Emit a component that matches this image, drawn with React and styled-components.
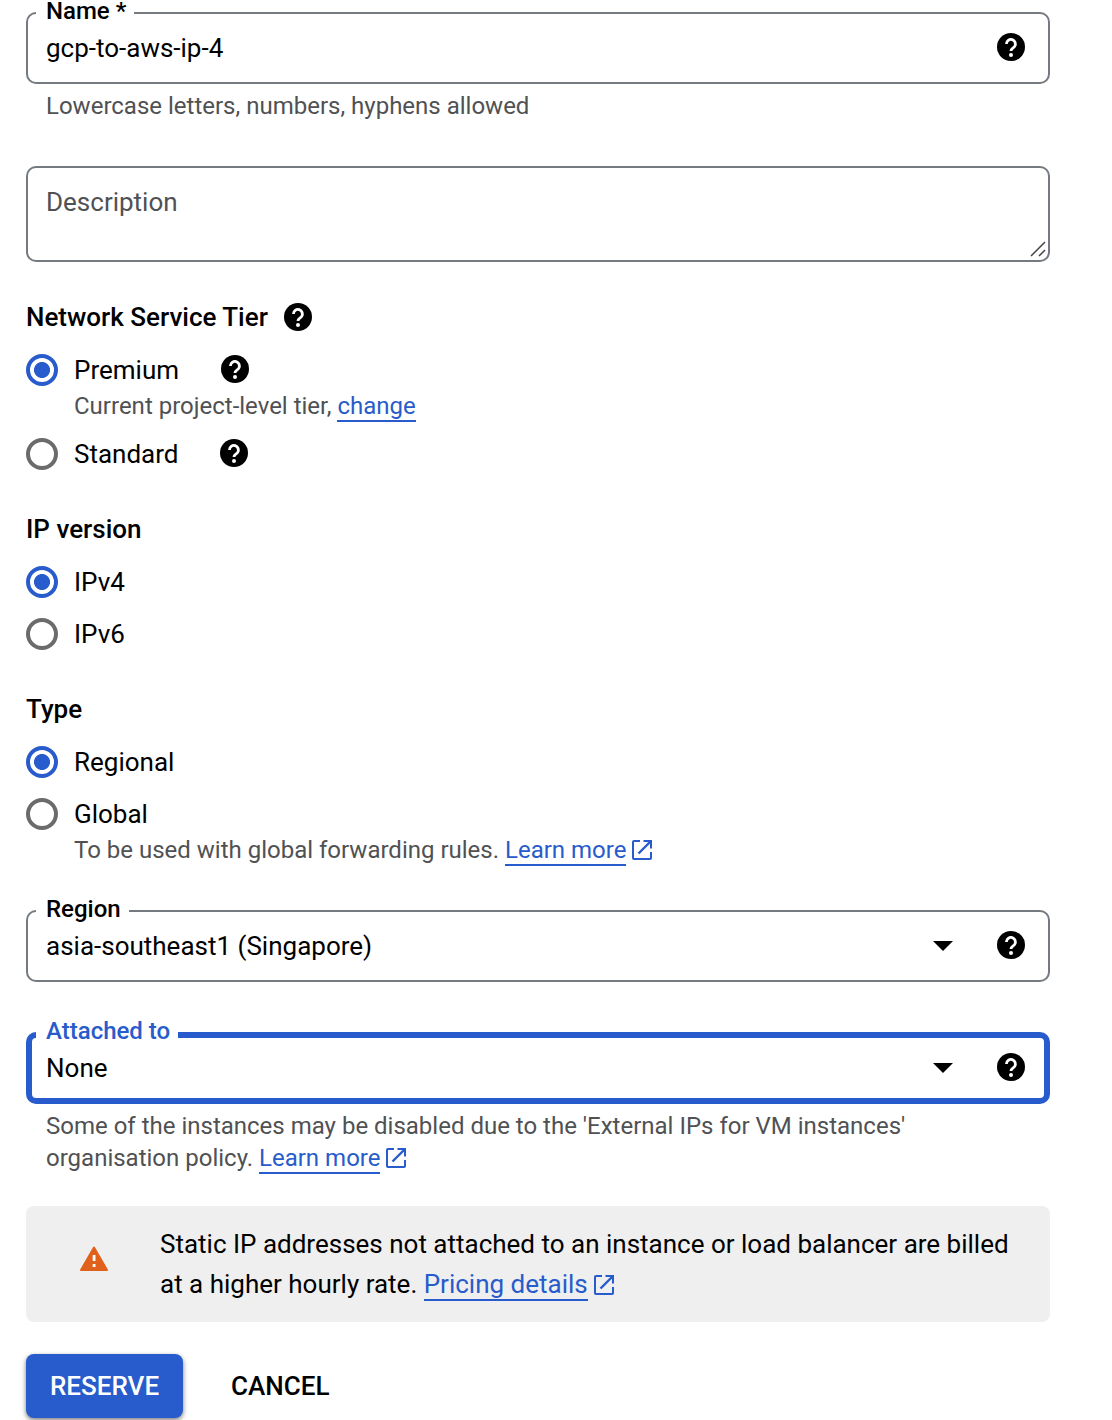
import React, { useState } from "react";
import styled, { createGlobalStyle } from "styled-components";

const blue = "#285bcb";
const grey = "#747a7f";
const mono = "#000";

const GlobalStyle = createGlobalStyle`
  *, *::before, *::after { box-sizing: border-box; }
  body {
    margin: 0;
    background: #fff;
    color: ${mono};
    font-family: Roboto, "Liberation Sans", sans-serif;
    font-size: 26px;
  }
  button, input, select, textarea { font: inherit; color: inherit; }
`;

const Form = styled.form`
  display: flex;
  flex-direction: column;
  padding: 12px 62px 2px 26px;
`;

const Field = styled.div`
  position: relative;
  display: flex;
  align-items: center;
  gap: 24px;
  height: 72px;
  margin-top: ${(p) => p.$gap || 0}px;
  padding: 0 25px 0 20px;
  border-radius: 10px;
  box-shadow: inset 0 0 0 ${(p) => (p.$active ? "6px" : "2px")} ${(p) => (p.$active ? blue : grey)};
`;

const FloatingLabel = styled.label`
  position: absolute;
  top: -12px;
  left: 10px;
  padding: 0 8px 2px 10px;
  background: #fff;
  color: ${(p) => (p.$active ? blue : mono)};
  font-size: 24px;
  font-weight: 500;
  line-height: 22px;
`;

const TextInput = styled.input`
  flex: 1;
  min-width: 0;
  height: 40px;
  padding: 0;
  border: 0;
  outline: 0;
  background: transparent;
`;

const SelectBox = styled.div`
  flex: 1;
  display: grid;
  align-items: center;
  padding-right: 20px;
`;

const Select = styled.select`
  grid-area: 1 / 1;
  width: 100%;
  height: 40px;
  padding: 0;
  border: 0;
  outline: 0;
  appearance: none;
  background: transparent;
`;

const Arrow = styled.svg`
  grid-area: 1 / 1;
  justify-self: end;
  width: 20px;
  height: 10px;
  pointer-events: none;
`;

const IconButton = styled.button`
  display: flex;
  padding: 0 0 2px;
  border: 0;
  background: none;
  cursor: pointer;
`;

const Hint = styled.p`
  margin: 6px 0 0;
  padding: 0 20px;
  color: #505153;
  font-size: 24px;
  line-height: 32px;
`;

const AreaBox = styled.div`
  display: grid;
  margin-top: 44px;
`;

const TextArea = styled.textarea`
  grid-area: 1 / 1;
  display: block;
  width: 100%;
  height: 96px;
  padding: 18px;
  border: 2px solid ${grey};
  border-radius: 10px;
  outline: 0;
  line-height: 32px;
  resize: none;
  background: transparent;
  &::placeholder { color: #505153; opacity: 1; }
`;

const Grip = styled.svg`
  grid-area: 1 / 1;
  place-self: end;
  width: 16px;
  height: 16px;
  margin: 0 4px 5px 0;
  pointer-events: none;
`;

const Section = styled.section`
  display: flex;
  flex-direction: column;
  gap: 16px;
  margin-top: ${(p) => p.$gap || 40}px;
`;

const Heading = styled.div`
  display: flex;
  align-items: center;
  gap: 16px;
  margin-bottom: 2px;
  ${IconButton} { padding: 0; }
`;

const Title = styled.h2`
  margin: 0;
  font-size: 26px;
  font-weight: 500;
  line-height: 34px;
`;

const OptionRow = styled.div`
  display: flex;
  align-items: center;
  gap: 42px;
  height: 36px;
`;

const OptionLabel = styled.label`
  display: flex;
  align-items: center;
  gap: 16px;
`;

const Radio = styled.input`
  appearance: none;
  width: 32px;
  height: 32px;
  margin: 0;
  border: 4px solid #6b6b6b;
  border-radius: 50%;
  &:checked {
    border-color: ${blue};
    background: radial-gradient(circle, ${blue} 0 7.6px, transparent 8.4px);
  }
`;

const OptionHint = styled.p`
  margin: 0;
  padding: 4px 0 0 48px;
  color: #505153;
  font-size: 24px;
  line-height: 28px;
`;

const Link = styled.a`
  color: ${blue};
  text-decoration: none;
  white-space: nowrap;
`;

const LinkText = styled.span`
  border-bottom: 2px solid ${blue};
`;

const ExternalIcon = styled.svg`
  width: 20px;
  height: 20px;
  margin-left: 6px;
  vertical-align: -2px;
`;

const Banner = styled.div`
  display: flex;
  align-items: flex-start;
  margin-top: 32px;
  padding: 18px 38px 18px 54px;
  gap: 52px;
  border-radius: 8px;
  background: #efefef;
`;

const WarningIcon = styled.svg`
  flex: none;
  width: 28px;
  height: 26px;
  margin-top: 22px;
`;

const BannerText = styled.p`
  margin: 0;
  line-height: 40px;
`;

const Actions = styled.div`
  display: flex;
  gap: 24px;
  margin-top: 32px;
`;

const Button = styled.button`
  height: 64px;
  padding: 0 24px;
  border: 0;
  border-radius: 8px;
  background: ${(p) => (p.$primary ? blue : "transparent")};
  color: ${(p) => (p.$primary ? "#fff" : mono)};
  font-weight: 500;
  box-shadow: ${(p) => (p.$primary ? "0 2px 4px rgba(0, 0, 0, 0.4), 0 2px 6px rgba(0, 0, 0, 0.15)" : "none")};
  cursor: pointer;
`;

function Help({ about }) {
  return (
    <IconButton type="button" aria-label={`Help: ${about}`}>
      <svg width="28" height="28" viewBox="0 0 28 28" aria-hidden="true">
        <circle cx="14" cy="14" r="14" fill="#000" />
        <path
          d="M9.400 10.900a4.500 4.500 0 1 1 8.200 2.600c-1.100 1.500-3.600 2-3.600 4.500"
          fill="none"
          stroke="#fff"
          strokeWidth="2.8"
        />
        <circle cx="14" cy="21.900" r="2" fill="#fff" />
      </svg>
    </IconButton>
  );
}

function External({ children }) {
  return (
    <Link href="#">
      <LinkText>{children}</LinkText>
      <ExternalIcon viewBox="0 0 20 20" fill="none" stroke={blue} strokeWidth="2" aria-hidden="true">
        <path d="M8 1H2a1 1 0 0 0-1 1v16a1 1 0 0 0 1 1h16a1 1 0 0 0 1-1v-6M11.500 1H19v7.500" />
        <path d="M18.500 1.500L6.500 13.500" strokeWidth="2.400" />
      </ExternalIcon>
    </Link>
  );
}

function SelectField({ id, label, value, gap, active }) {
  return (
    <Field $gap={gap} $active={active}>
      <FloatingLabel htmlFor={id} $active={active}>{label}</FloatingLabel>
      <SelectBox>
        <Select id={id} defaultValue={value}>
          <option>{value}</option>
        </Select>
        <Arrow viewBox="0 0 20 10" aria-hidden="true"><path d="M0 0h20L10 10z" /></Arrow>
      </SelectBox>
      <Help about={label} />
    </Field>
  );
}

function Option({ group, value, selected, onSelect, help, children }) {
  return (
    <div>
      <OptionRow>
        <OptionLabel>
          <Radio type="radio" name={group} checked={selected === value} onChange={() => onSelect(value)} />
          {value}
        </OptionLabel>
        {help && <Help about={value} />}
      </OptionRow>
      {children && <OptionHint>{children}</OptionHint>}
    </div>
  );
}

export default function App() {
  const [name, setName] = useState("gcp-to-aws-ip-4");
  const [tier, setTier] = useState("Premium");
  const [version, setVersion] = useState("IPv4");
  const [type, setType] = useState("Regional");

  return (
    <>
      <GlobalStyle />
      <Form onSubmit={(e) => e.preventDefault()}>
        <Field>
          <FloatingLabel htmlFor="name">Name *</FloatingLabel>
          <TextInput id="name" value={name} onChange={(e) => setName(e.target.value)} />
          <Help about="Name" />
        </Field>
        <Hint>Lowercase letters, numbers, hyphens allowed</Hint>

        <AreaBox>
          <TextArea aria-label="Description" placeholder="Description" />
          <Grip viewBox="0 0 16 16" fill="none" stroke="#444" strokeWidth="1.5" aria-hidden="true">
            <path d="M1 15L15 1M9 15l6-6" />
          </Grip>
        </AreaBox>

        <Section $gap={38}>
          <Heading><Title>Network Service Tier</Title><Help about="Network Service Tier" /></Heading>
          <Option group="tier" value="Premium" selected={tier} onSelect={setTier} help>
            Current project-level tier, <Link href="#"><LinkText>change</LinkText></Link>
          </Option>
          <Option group="tier" value="Standard" selected={tier} onSelect={setTier} help />
        </Section>

        <Section>
          <Heading><Title>IP version</Title></Heading>
          <Option group="version" value="IPv4" selected={version} onSelect={setVersion} />
          <Option group="version" value="IPv6" selected={version} onSelect={setVersion} />
        </Section>

        <Section>
          <Heading><Title>Type</Title></Heading>
          <Option group="type" value="Regional" selected={type} onSelect={setType} />
          <Option group="type" value="Global" selected={type} onSelect={setType}>
            To be used with global forwarding rules. <External>Learn more</External>
          </Option>
        </Section>

        <SelectField id="region" label="Region" value="asia-southeast1 (Singapore)" gap={46} />
        <SelectField id="attached" label="Attached to" value="None" gap={50} active />
        <Hint>
          Some of the instances may be disabled due to the 'External IPs for VM instances' organisation
          policy. <External>Learn more</External>
        </Hint>

        <Banner>
          <WarningIcon viewBox="0 0 28 26" aria-hidden="true">
            <path d="M14 1.500L27 24H1z" fill="#e0611b" stroke="#e0611b" strokeWidth="2" strokeLinejoin="round" />
            <path d="M12.700 9h2.800v6h-2.800zM12.700 18h2.800v3h-2.800z" fill="#fff" />
          </WarningIcon>
          <BannerText>
            Static IP addresses not attached to an instance or load balancer are billed at a higher hourly
            rate. <External>Pricing details</External>
          </BannerText>
        </Banner>

        <Actions>
          <Button type="submit" $primary>RESERVE</Button>
          <Button type="button">CANCEL</Button>
        </Actions>
      </Form>
    </>
  );
}
